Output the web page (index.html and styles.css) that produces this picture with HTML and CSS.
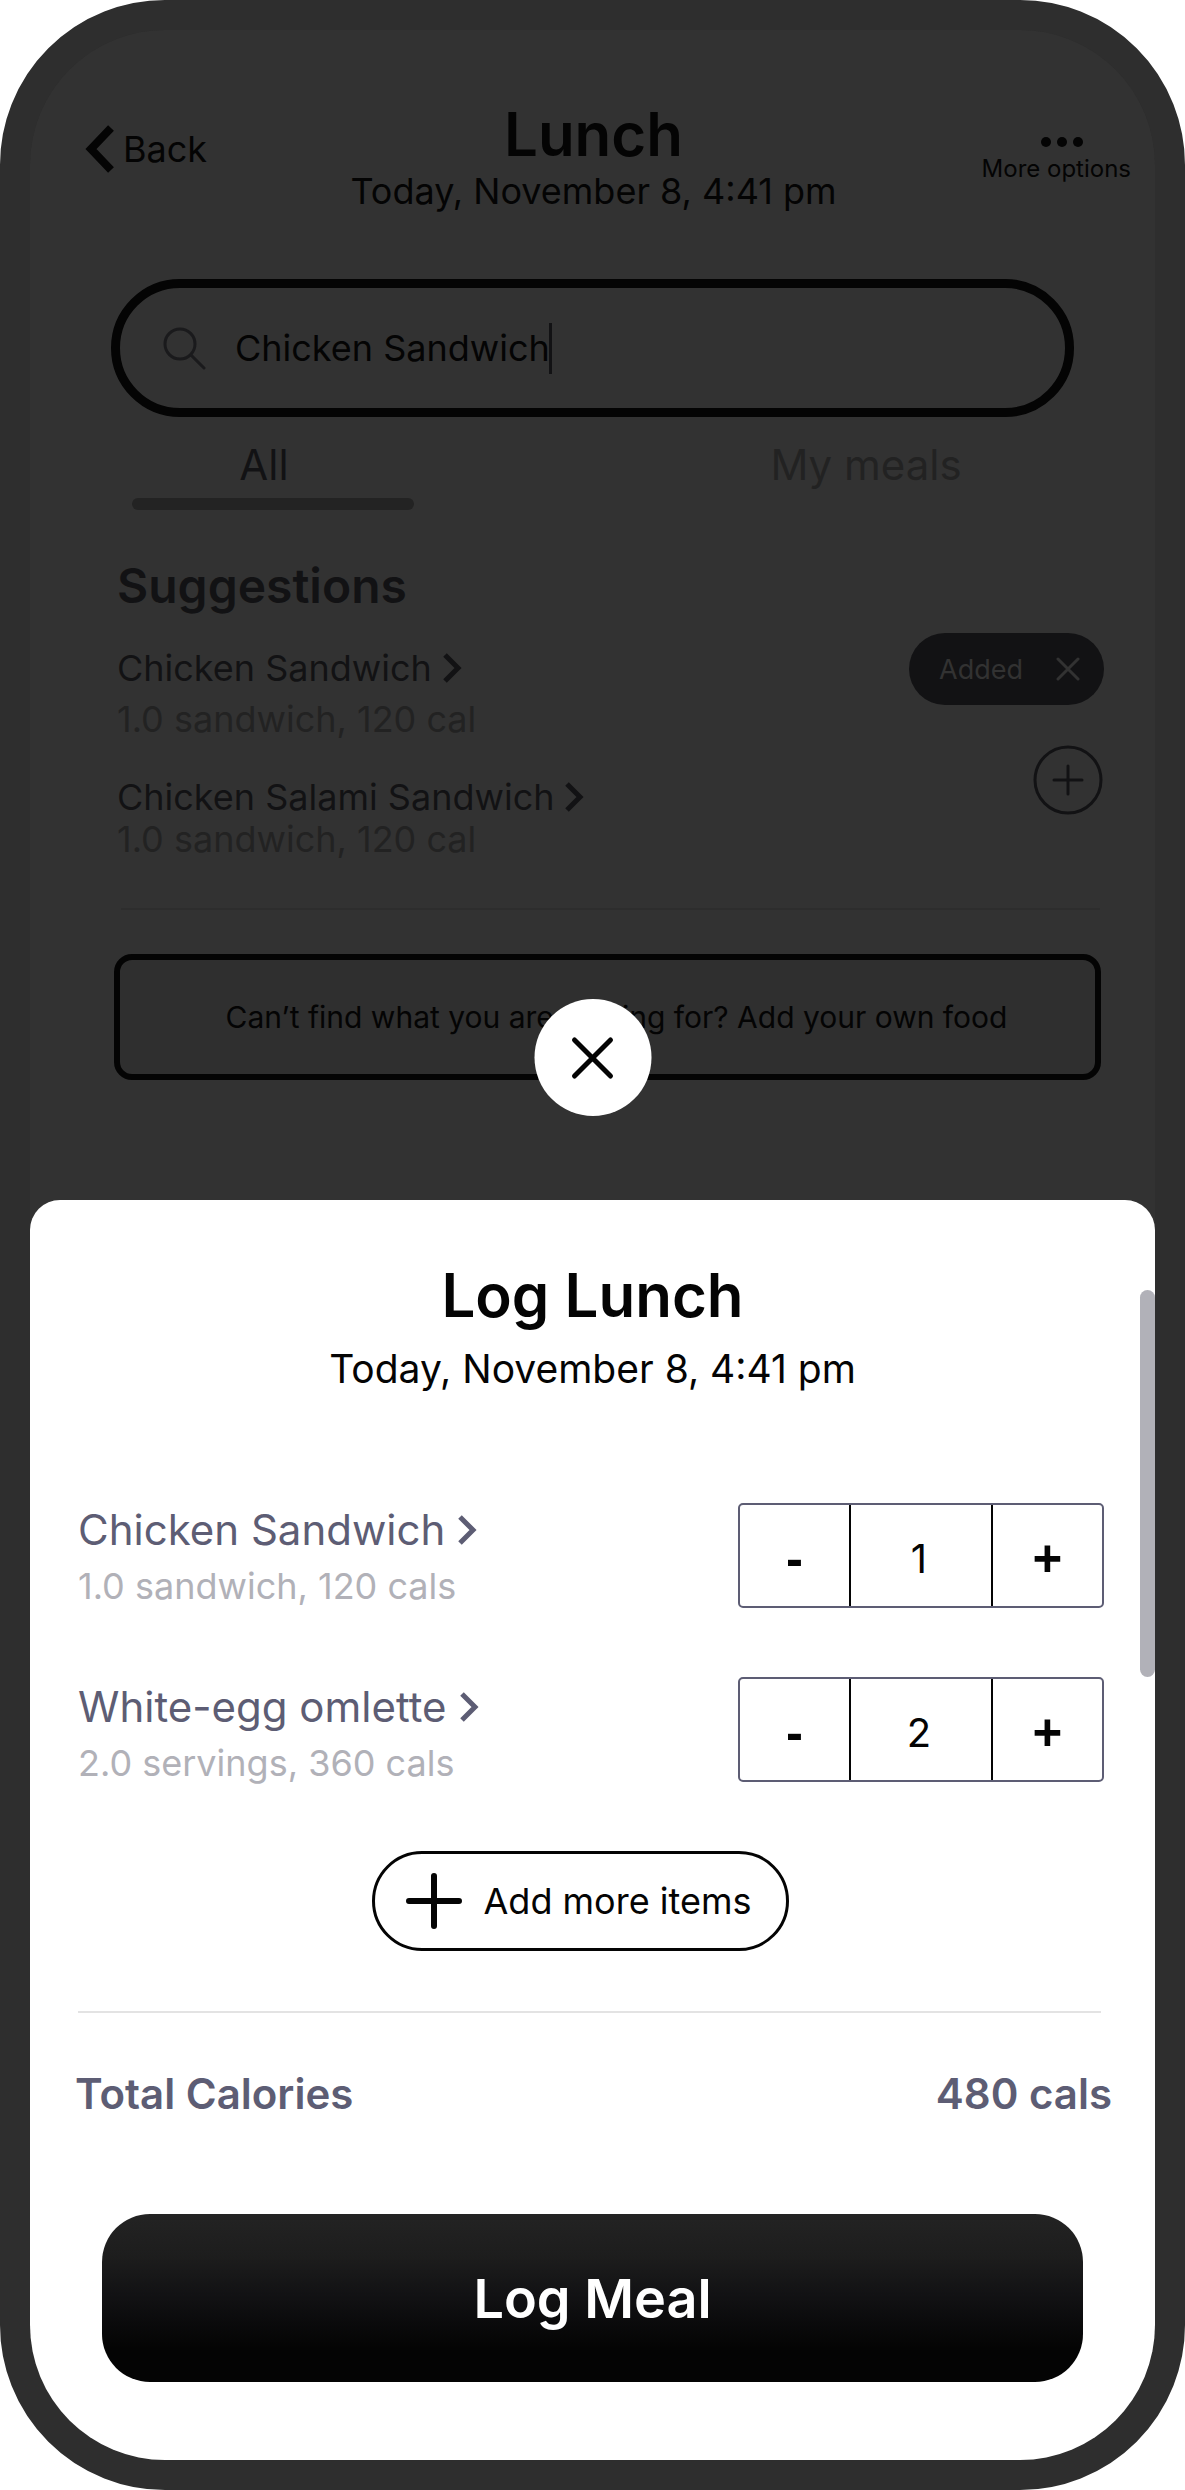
FILE: index.html
```html
<!DOCTYPE html>
<html lang="en">
<head>
<meta charset="utf-8">
<meta name="viewport" content="width=device-width, initial-scale=1">
<title>Log Lunch</title>
<link rel="stylesheet" href="styles.css">
</head>
<body>
<div class="phone">
  <header class="header">
    <a class="back" href="#">
      <svg width="32" height="54" viewBox="0 0 32 54" fill="none" stroke="currentColor" stroke-width="8"><path d="M28 6 8 27 28 48"/></svg>
      Back
    </a>
    <div class="heading">
      <h1 class="title">Lunch</h1>
      <p class="date">Today, November 8, 4:41 pm</p>
    </div>
    <button class="more" type="button">
      <svg width="54" height="18" viewBox="0 0 54 18" fill="currentColor"><circle cx="17" cy="9" r="5"/><circle cx="33" cy="9" r="5"/><circle cx="49" cy="9" r="5"/></svg>
      More options
    </button>
  </header>

  <label class="search">
    <svg width="43" height="43" viewBox="0 0 43 43" fill="none" stroke="currentColor" stroke-width="3" stroke-linecap="round"><circle cx="17" cy="17" r="15"/><path d="m28 28 13 13"/></svg>
    <input class="search-input" type="text" value="Chicken Sandwich" aria-label="Search food">
    <span class="caret"></span>
  </label>

  <nav class="tabs">
    <button class="tab tab-active" type="button">All</button>
    <button class="tab" type="button">My meals</button>
  </nav>

  <section class="suggestions">
    <h2 class="section-title">Suggestions</h2>
    <div class="food">
      <div class="food-info">
        <a class="food-name" href="#">Chicken Sandwich
          <svg width="20" height="32" viewBox="0 0 20 32" fill="none" stroke="currentColor" stroke-width="5"><path d="m3 3 13 13L3 29"/></svg></a>
        <p class="food-detail">1.0 sandwich, 120 cal</p>
      </div>
      <button class="added" type="button">Added
        <svg width="24" height="24" viewBox="0 0 24 24" fill="none" stroke="currentColor" stroke-width="3" stroke-linecap="round"><path d="m2 2 20 20M22 2 2 22"/></svg></button>
    </div>
    <div class="food food-compact">
      <div class="food-info">
        <a class="food-name" href="#">Chicken Salami Sandwich
          <svg width="20" height="32" viewBox="0 0 20 32" fill="none" stroke="currentColor" stroke-width="5"><path d="m3 3 13 13L3 29"/></svg></a>
        <p class="food-detail">1.0 sandwich, 120 cal</p>
      </div>
      <button class="add" type="button" aria-label="Add Chicken Salami Sandwich">
        <svg width="72" height="70" viewBox="0 0 72 70" fill="none" stroke="currentColor" stroke-width="3" stroke-linecap="round"><circle cx="36" cy="35" r="33"/><path d="M36 21v28M22 35h28"/></svg></button>
    </div>
  </section>

  <hr class="divider">
  <button class="custom-food" type="button">Can’t find what you are looking for? Add your own food</button>

  <main class="sheet">
    <button class="close" type="button" aria-label="Close">
      <svg width="44" height="44" viewBox="0 0 44 44" fill="none" stroke="currentColor" stroke-width="5" stroke-linecap="round"><path d="m4 4 36 36M40 4 4 40"/></svg>
    </button>
    <div class="scrollbar"></div>
    <h2 class="sheet-title">Log Lunch</h2>
    <p class="sheet-date">Today, November 8, 4:41 pm</p>

    <div class="items">
      <div class="item">
        <div class="item-info">
          <a class="item-name" href="#">Chicken Sandwich
            <svg width="20" height="32" viewBox="0 0 20 32" fill="none" stroke="currentColor" stroke-width="5"><path d="m3 3 13 13L3 29"/></svg></a>
          <p class="item-detail">1.0 sandwich, 120 cals</p>
        </div>
        <div class="stepper">
          <button class="step" type="button" aria-label="One less">-</button>
          <input class="count" type="text" inputmode="numeric" value="1" aria-label="Chicken Sandwich quantity">
          <button class="step" type="button" aria-label="One more">+</button>
        </div>
      </div>
      <div class="item">
        <div class="item-info">
          <a class="item-name" href="#">White-egg omlette
            <svg width="20" height="32" viewBox="0 0 20 32" fill="none" stroke="currentColor" stroke-width="5"><path d="m3 3 13 13L3 29"/></svg></a>
          <p class="item-detail">2.0 servings, 360 cals</p>
        </div>
        <div class="stepper">
          <button class="step" type="button" aria-label="One less">-</button>
          <input class="count" type="text" inputmode="numeric" value="2" aria-label="White-egg omlette quantity">
          <button class="step" type="button" aria-label="One more">+</button>
        </div>
      </div>
    </div>

    <button class="add-more" type="button">
      <svg width="56" height="56" viewBox="0 0 56 56" fill="none" stroke="currentColor" stroke-width="6" stroke-linecap="round"><path d="M28 3v50M3 28h50"/></svg>
      Add more items
    </button>
    <hr class="sheet-divider">
    <div class="total"><span>Total Calories</span><span>480 cals</span></div>
    <button class="log-meal" type="button">Log Meal</button>
  </main>
</div>
</body>
</html>
```

FILE: styles.css
```css
* {
  box-sizing: border-box;
}

body {
  margin: 0;
  background: #fff;
  font-family: Inter, "Liberation Sans", sans-serif;
  font-size: 36px;
}

h1, h2, p {
  margin: 0;
}

h1, h2 {
  font-weight: 600;
}

a {
  color: inherit;
  text-decoration: none;
}

button, input {
  margin: 0;
  padding: 0;
  border: 0;
  background: none;
  color: inherit;
  font: inherit;
}

hr {
  height: 2px;
  border: 0;
}

svg {
  display: block;
  flex: none;
}

.phone {
  display: flex;
  flex-direction: column;
  min-height: 100vh;
  border: 30px solid #2e2e2e;
  border-radius: 165px;
  overflow: hidden;
  background: linear-gradient(#323232, #323232) padding-box, #2e2e2e;
  color: #040404;
}

/* Header */
.header {
  display: grid;
  grid-template-columns: 1fr auto 1fr;
  align-items: start;
  padding: 74px 24px 0 26px;
}

.back {
  display: flex;
  align-items: center;
  gap: 8px;
  padding: 18px 0 0 27px;
  line-height: 54px;
}

.heading {
  text-align: center;
}

.title {
  font-size: 60px;
  line-height: 60px;
}

.date {
  line-height: 54px;
}

.more {
  display: flex;
  flex-direction: column;
  align-items: center;
  justify-self: end;
  padding-top: 29px;
  font-size: 24px;
  line-height: 36px;
}

/* Search */
.search {
  display: flex;
  align-items: center;
  height: 138px;
  margin: 61px 81px 0;
  padding-left: 43px;
  border: 9px solid #040404;
  border-radius: 69px;
}

.search svg {
  color: #1a1a1c;
}

.search-input {
  width: 314px;
  margin-left: 29px;
}

.caret {
  width: 3px;
  height: 51px;
  background: #121214;
}

/* Tabs */
.tabs {
  display: flex;
  justify-content: space-between;
  align-items: flex-start;
  padding: 21px 148px 0 102px;
}

.tab {
  width: 282px;
  color: #222;
  font-size: 42px;
  line-height: 54px;
}

.tab-active {
  position: relative;
  height: 72px;
  padding: 0 18px 18px 0;
  color: #121214;
}

.tab-active::after {
  content: "";
  position: absolute;
  inset: auto 0 0;
  height: 12px;
  border-radius: 6px;
  background: #232323;
}

/* Suggestions */
.suggestions {
  padding: 46px 51px 0 87px;
  color: #121214;
}

.section-title {
  margin-bottom: 17px;
  font-size: 48px;
  line-height: 60px;
}

.food {
  display: flex;
  justify-content: space-between;
  align-items: flex-start;
}

.food-info {
  padding-top: 10px;
}

.food-name {
  display: flex;
  align-items: center;
  gap: 10px;
  line-height: 50px;
}

.food-detail {
  color: #222;
  line-height: 52px;
}

.food-compact .food-info {
  padding-top: 31px;
}

.food-compact .food-name,
.food-compact .food-detail {
  line-height: 42px;
}

.added {
  display: flex;
  justify-content: space-between;
  align-items: center;
  width: 195px;
  height: 72px;
  padding: 0 24px 0 30px;
  border-radius: 36px;
  background: #121214;
  color: #323232;
  font-size: 27px;
}

.divider {
  margin: 48px 55px 44px 91px;
  background: #2d2d2d;
}

.custom-food {
  height: 126px;
  margin: 0 54px 120px 84px;
  padding-left: 18px;
  border: 6px solid #040404;
  border-radius: 18px;
  background: #2f2f2f;
  font-size: 30px;
}

/* Log sheet */
.sheet {
  position: relative;
  display: flex;
  flex-direction: column;
  flex: 1;
  padding: 59px 0 78px;
  border-radius: 30px 30px 0 0;
  background: #fff;
}

.close {
  position: absolute;
  top: -201px;
  left: 50%;
  display: flex;
  align-items: center;
  justify-content: center;
  width: 117px;
  height: 117px;
  border-radius: 50%;
  background: #fff;
  transform: translateX(-50%);
}

.scrollbar {
  position: absolute;
  top: 90px;
  right: 0;
  width: 15px;
  height: 387px;
  border-radius: 8px;
  background: #b1b1b8;
}

.sheet-title {
  font-size: 60px;
  line-height: 72px;
  text-align: center;
}

.sheet-date {
  margin-top: 14px;
  font-size: 39px;
  line-height: 48px;
  text-align: center;
}

.items {
  display: grid;
  gap: 62px;
  margin: 110px 51px 0 48px;
}

.item {
  display: flex;
  justify-content: space-between;
  align-items: flex-start;
}

.item + .item .item-info {
  padding-top: 3px;
}

.item-name {
  display: flex;
  align-items: center;
  gap: 12px;
  color: #5d5d74;
  font-size: 42px;
  line-height: 54px;
}

.item-detail {
  color: #b1b1b8;
  line-height: 58px;
}

.stepper {
  display: grid;
  grid-template-columns: 1fr 144px 1fr;
  width: 366px;
  height: 105px;
  border: 2px solid #5d5d74;
  border-radius: 5px;
}

.step {
  padding-top: 6px;
  font-family: "Liberation Sans", Arial, sans-serif;
  font-size: 51px;
  font-weight: 700;
}

.count {
  width: 100%;
  padding: 6px 4px 0 0;
  border: solid #040404;
  border-width: 0 2px;
  font-size: 40px;
  text-align: center;
}

.add-more {
  display: flex;
  align-items: center;
  align-self: center;
  gap: 22px;
  height: 100px;
  margin: 59px 24px 0 0;
  padding: 0 35px 0 31px;
  border: 3px solid #040404;
  border-radius: 50px;
}

.sheet-divider {
  width: auto;
  margin: 60px 54px 51px 48px;
  background: #e3e3e3;
}

.total {
  display: flex;
  justify-content: space-between;
  margin: 0 43px 0 45px;
  color: #5d5d74;
  font-size: 42px;
  font-weight: 600;
  line-height: 60px;
}

.log-meal {
  height: 168px;
  margin: 90px 72px 0;
  border-radius: 48px;
  background: linear-gradient(#232323, #1d1d1d 25%, #121214 48%, #040404 80%, #040404);
  color: #fff;
  font-size: 54px;
  font-weight: 600;
}
```
